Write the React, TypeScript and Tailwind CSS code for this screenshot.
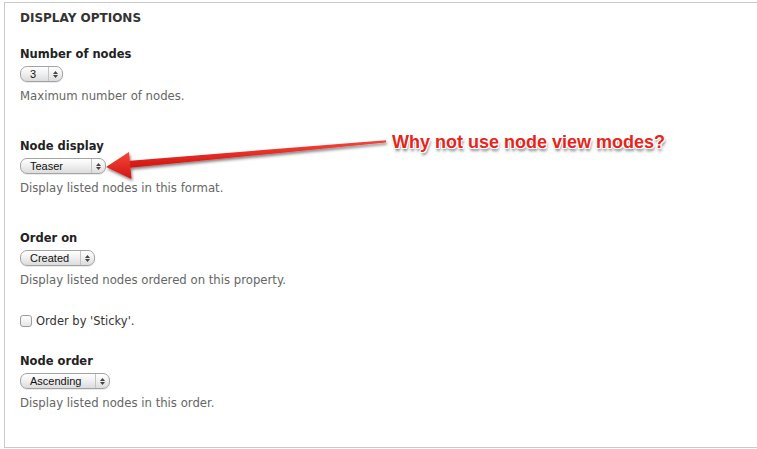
const labelFont = "font-['DejaVu_Sans',sans-serif]";

function FakeSelect({ value, width }: { value: string; width: number }) {
  return (
    <div
      className="flex h-[16px] items-stretch rounded-[7px] border border-[#a3a3a3] bg-[linear-gradient(#ffffff,#f1f1f1_45%,#dcdcdc)] shadow-[0_1px_0_rgba(0,0,0,0.08)]"
      style={{ width }}
    >
      <span className="flex flex-1 items-center pl-[9px] font-['Liberation_Sans',sans-serif] text-[11px] leading-none text-[#111]">
        {value}
      </span>
      <span className="flex w-[14px] flex-col items-center justify-center gap-[1px] border-l border-[#c4c4c4]">
        <svg width="5" height="3" viewBox="0 0 5 3">
          <path d="M0 3 L2.5 0 L5 3 Z" fill="#444" />
        </svg>
        <svg width="5" height="3" viewBox="0 0 5 3">
          <path d="M0 0 L5 0 L2.5 3 Z" fill="#444" />
        </svg>
      </span>
    </div>
  );
}

function FormItem({ label, value, width, help, className }: { label: string; value: string; width: number; help: string; className: string }) {
  return (
    <div className={className}>
      <div className={`${labelFont} text-[11.5px] font-bold leading-[16px] text-[#222]`}>{label}</div>
      <div className="mt-[4px]">
        <FakeSelect value={value} width={width} />
      </div>
      <div className={`${labelFont} mt-[6px] text-[11.7px] leading-[16px] text-[#666]`}>{help}</div>
    </div>
  );
}

function Annotation() {
  return (
    <>
      <svg className="pointer-events-none absolute left-0 top-0" width="757" height="449" viewBox="0 0 757 449">
        <defs>
          <linearGradient id="redFill" x1="0" y1="0" x2="0" y2="1">
            <stop offset="0" stopColor="#f5463c" />
            <stop offset="1" stopColor="#d2140f" />
          </linearGradient>
          <filter id="arrowShadow" x="-10%" y="-50%" width="120%" height="200%">
            <feDropShadow dx="1" dy="2" stdDeviation="1.5" floodColor="#000" floodOpacity="0.5" />
          </filter>
        </defs>
        <g filter="url(#arrowShadow)">
          <polygon points="127,161 386,140.2 386,142.4 127.5,168" fill="url(#redFill)" />
          <polygon points="106,167 129,152 131.5,179" fill="url(#redFill)" />
        </g>
      </svg>
      <div className="absolute left-[392px] top-[131px] whitespace-nowrap font-['Liberation_Sans',sans-serif] text-[18px] font-bold leading-[22px] text-[#e6251d] [text-shadow:0_0_1px_#fff,0_0_2px_#fff,1px_1px_0_#fff,-1px_-1px_0_#fff,1px_-1px_0_#fff,-1px_1px_0_#fff,1px_3px_3px_rgba(0,0,0,0.55)]">
        Why not use node view modes?
      </div>
    </>
  );
}

export default function App() {
  return (
    <div className="relative h-[449px] w-[757px] overflow-hidden bg-white">
      <div className="ml-[4px] mt-[2px] h-[446px] w-[780px] border-b border-l border-t border-[#cacaca] pl-[15px] pt-[7px]">
        <div className={`${labelFont} text-[12px] font-bold leading-[16px] text-[#333]`}>DISPLAY OPTIONS</div>

        <FormItem className="mt-[20px]" label="Number of nodes" value="3" width={43} help="Maximum number of nodes." />
        <FormItem className="mt-[34px]" label="Node display" value="Teaser" width={86} help="Display listed nodes in this format." />
        <FormItem className="mt-[34px]" label="Order on" value="Created" width={75} help="Display listed nodes ordered on this property." />

        <label className="mt-[25px] flex h-[16px] items-center gap-[4px]">
          <span className="h-[12px] w-[12px] rounded-[3px] border border-[#9b9b9b] bg-[linear-gradient(#ffffff,#e6e6e6)]" />
          <span className={`${labelFont} text-[11.5px] leading-[16px] text-[#333]`}>Order by 'Sticky'.</span>
        </label>

        <FormItem className="mt-[24px]" label="Node order" value="Ascending" width={90} help="Display listed nodes in this order." />
      </div>
      <Annotation />
    </div>
  );
}
